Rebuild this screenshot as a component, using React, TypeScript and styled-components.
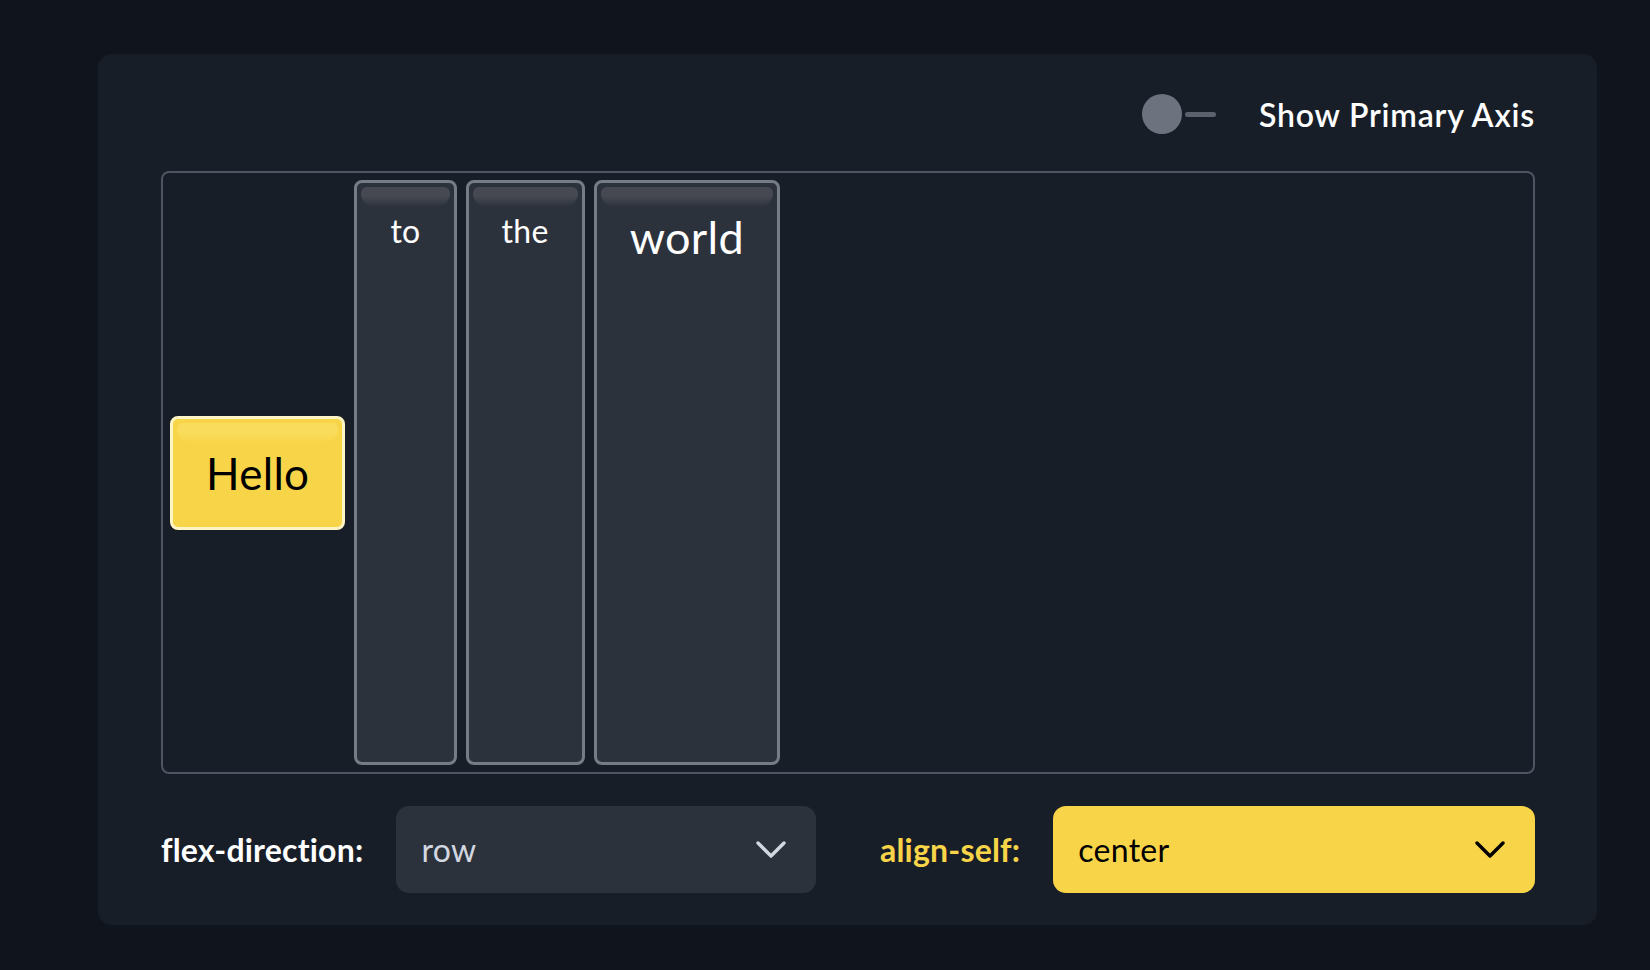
import React from "react";
import styled, { createGlobalStyle } from "styled-components";

const GlobalStyle = createGlobalStyle`
  html, body {
    margin: 0;
    padding: 0;
    background: #10141c;
  }
  body {
    font-family: Lato, "Open Sans", sans-serif;
    -webkit-font-smoothing: antialiased;
  }
`;

const Page = styled.div`
  padding: 54px 53px 46px 98px;
`;

const Card = styled.section`
  width: 1499px;
  box-sizing: border-box;
  padding: 32px 62px 32px 63px;
  background: #181e28;
  border-radius: 14px;
`;

const Header = styled.div`
  display: flex;
  justify-content: flex-end;
  align-items: center;
  height: 56px;
  margin-bottom: 29px;
  gap: 43px;
`;

const Toggle = styled.button`
  display: flex;
  align-items: center;
  width: 74px;
  height: 40px;
  padding: 0;
  border: none;
  background: transparent;
  cursor: pointer;
`;

const Knob = styled.span`
  width: 40px;
  height: 40px;
  border-radius: 50%;
  background: #6c737f;
`;

const Track = styled.span`
  flex: 1;
  height: 5px;
  margin-left: 3px;
  border-radius: 3px;
  background: #5b626e;
`;

const ToggleLabel = styled.span`
  color: #ffffff;
  font-size: 32px;
  font-weight: 600;
  letter-spacing: 0.8px;
`;

const Stage = styled.div`
  display: flex;
  flex-direction: row;
  align-items: stretch;
  gap: 9px;
  height: 603px;
  box-sizing: border-box;
  padding: 7px;
  border: 2px solid #4d5462;
  border-radius: 8px;
`;

const Item = styled.div<{ $size: number; $active?: boolean }>`
  position: relative;
  box-sizing: border-box;
  padding: 32px 33px;
  border: 3px solid ${(p) => (p.$active ? "#fff4c4" : "#757c88")};
  border-radius: 8px;
  background: ${(p) => (p.$active ? "#f8d548" : "#2c323c")};
  color: ${(p) => (p.$active ? "#000000" : "#ffffff")};
  font-size: ${(p) => p.$size}px;
  line-height: 1;
  letter-spacing: 0.3px;
  align-self: ${(p) => (p.$active ? "center" : "stretch")};

  &::before {
    content: "";
    position: absolute;
    top: 4px;
    left: 4px;
    right: 4px;
    height: 20px;
    border-radius: 6px 6px 14px 14px;
    background: ${(p) =>
      p.$active
        ? "linear-gradient(#fadc5c 50%, rgba(250, 220, 92, 0))"
        : "linear-gradient(#464952 45%, rgba(70, 73, 82, 0))"};
  }
`;

const ItemText = styled.span`
  position: relative;
`;

const Controls = styled.div`
  display: grid;
  grid-template-columns: 1fr 1fr;
  gap: 64px;
  margin-top: 32px;
`;

const Field = styled.label`
  display: flex;
  align-items: center;
  gap: 33px;
`;

const FieldLabel = styled.span<{ $highlight?: boolean }>`
  color: ${(p) => (p.$highlight ? "#f8d548" : "#ffffff")};
  font-size: 32px;
  font-weight: 700;
  letter-spacing: 0.2px;
  white-space: nowrap;
`;

const Select = styled.div<{ $highlight?: boolean }>`
  flex: 1;
  display: flex;
  align-items: center;
  justify-content: space-between;
  height: 87px;
  box-sizing: border-box;
  padding: 0 30px 0 25px;
  border-radius: 13px;
  background: ${(p) => (p.$highlight ? "#f8d548" : "#2c323c")};
  color: ${(p) => (p.$highlight ? "#000000" : "#d3d8e0")};
  font-size: 32px;
  letter-spacing: 0.3px;
`;

const Chevron = ({ color }: { color: string }) => (
  <svg width="30" height="18" viewBox="0 0 30 18" fill="none">
    <path
      d="M2 2 L15 15 L28 2"
      stroke={color}
      strokeWidth="3.4"
      strokeLinecap="round"
      strokeLinejoin="round"
    />
  </svg>
);

const items = [
  { label: "Hello", size: 44, active: true },
  { label: "to", size: 32 },
  { label: "the", size: 32 },
  { label: "world", size: 45 },
];

export default function App() {
  return (
    <Page>
      <GlobalStyle />
      <Card>
        <Header>
          <Toggle aria-label="Show Primary Axis">
            <Knob />
            <Track />
          </Toggle>
          <ToggleLabel>Show Primary Axis</ToggleLabel>
        </Header>
        <Stage>
          {items.map((item) => (
            <Item key={item.label} $size={item.size} $active={item.active}>
              <ItemText>{item.label}</ItemText>
            </Item>
          ))}
        </Stage>
        <Controls>
          <Field>
            <FieldLabel>flex-direction:</FieldLabel>
            <Select>
              <span>row</span>
              <Chevron color="#d3d8e0" />
            </Select>
          </Field>
          <Field>
            <FieldLabel $highlight>align-self:</FieldLabel>
            <Select $highlight>
              <span>center</span>
              <Chevron color="#000000" />
            </Select>
          </Field>
        </Controls>
      </Card>
    </Page>
  );
}
